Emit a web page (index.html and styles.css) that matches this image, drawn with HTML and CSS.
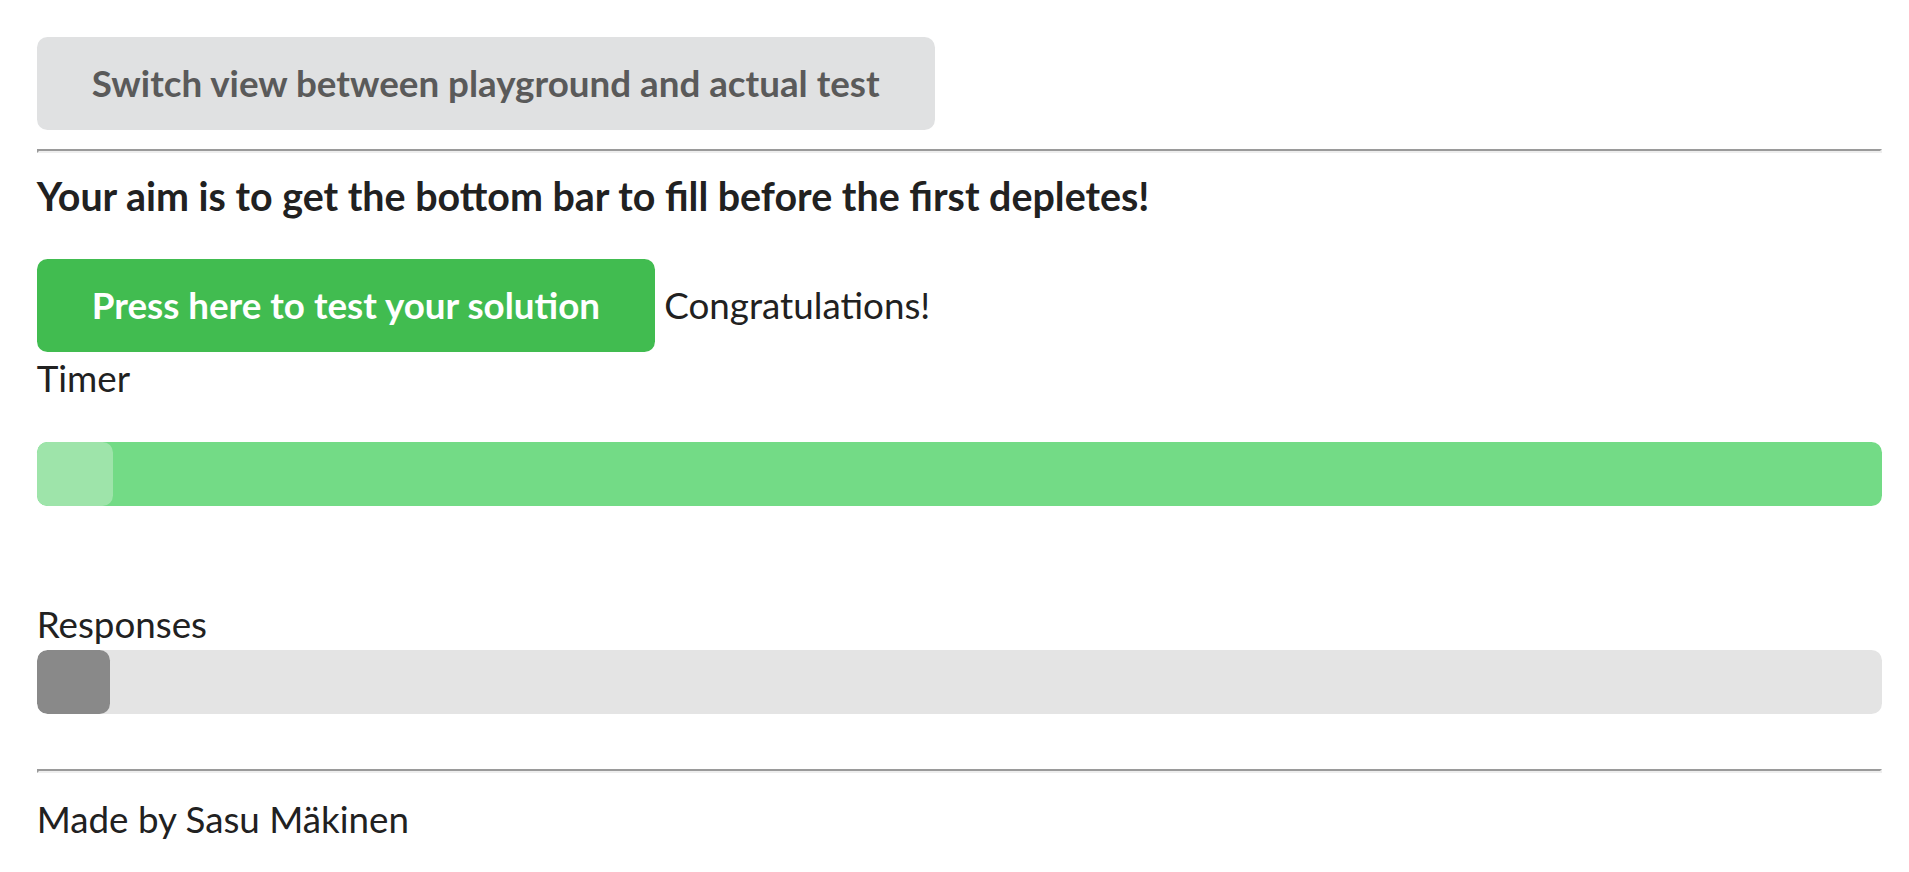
FILE: index.html
```html
<!DOCTYPE html>
<html lang="en">
<head>
<meta charset="utf-8">
<title>Reaction test</title>
<link rel="stylesheet" href="styles.css">
</head>
<body>
<div class="page">
  <div class="top-row">
    <button class="btn btn-grey">Switch view between playground and actual test</button>
  </div>
  <hr class="rule rule-top">
  <h4 class="aim">Your aim is to get the bottom bar to fill before the first depletes!</h4>
  <div class="test-row">
    <button class="btn btn-green">Press here to test your solution</button>
    <span class="result">Congratulations!</span>
  </div>
  <div class="label">Timer</div>
  <div class="progress progress-timer">
    <div class="bar bar-timer" style="width: 76px"></div>
  </div>
  <div class="label">Responses</div>
  <div class="progress progress-responses">
    <div class="bar bar-responses" style="width: 73.5px"></div>
  </div>
  <hr class="rule rule-bottom">
  <div class="footer">Made by Sasu Mäkinen</div>
</div>
</body>
</html>
```
FILE: styles.css
```css
html, body {
  margin: 0;
  padding: 0;
  background: #ffffff;
}

body {
  font-family: Lato, "Open Sans", "Liberation Sans", sans-serif;
  font-size: 36.75px;
  line-height: 52.5px;
  color: #212121;
}

.page {
  width: 1845.5px;
  padding: 36.7px 0 0 36.7px;
}

.top-row {
  display: flex;
}

.btn {
  font-family: Lato, "Open Sans", "Liberation Sans", sans-serif;
  font-size: 36.75px;
  font-weight: 700;
  line-height: 36.75px;
  padding: 28.3px 55.1px;
  border: none;
  border-radius: 10.5px;
  margin: 0;
  cursor: pointer;
}

.btn-grey {
  background: #e0e1e2;
  color: #5a5a5a;
}

.btn-green {
  background: #41bc50;
  color: #ffffff;
}

.rule {
  height: 0;
  border-style: solid;
  border-width: 2.8px 2.6px 2.6px 2.6px;
  border-color: #9a9a9a #eeeeee #eeeeee #9a9a9a;
  margin: 0;
}

.rule-top {
  margin-top: 19px;
  margin-bottom: 18px;
}

.rule-bottom {
  margin-top: 55px;
  margin-bottom: 20px;
}

.aim {
  font-size: 39.4px;
  line-height: 50.6px;
  font-weight: 700;
  margin: 0 0 37px 0;
}

.test-row {
  display: flex;
  align-items: baseline;
  gap: 9.2px;
}

.result {
  font-weight: 400;
}

.label {
  font-weight: 400;
}

.progress {
  height: 63.5px;
  border-radius: 10.5px;
  overflow: hidden;
  display: flex;
}

.progress-timer {
  background: #73db86;
  margin: 38px 0 92px 0;
}

.progress-responses {
  background: #e4e4e4;
  margin: 0;
}

.bar {
  height: 100%;
  border-radius: 10.5px;
}

.bar-timer {
  background: #9ee4aa;
}

.bar-responses {
  background: #898989;
}

.footer {
  font-weight: 400;
}
```
